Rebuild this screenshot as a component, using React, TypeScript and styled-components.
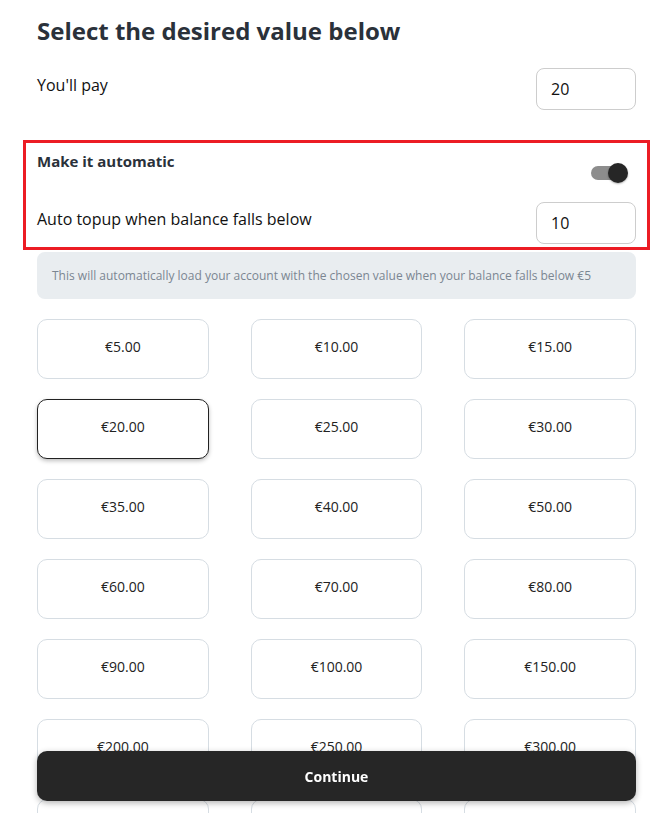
import { useState } from 'react'
import styled, { createGlobalStyle } from 'styled-components'

const GlobalStyle = createGlobalStyle`
  body {
    margin: 0;
    background: #fff;
    font-family: 'Open Sans', 'Noto Sans', sans-serif;
    color: #111;
  }
`

const Page = styled.div`
  padding: 15px 33px 90px 37px;
`

const Title = styled.h1`
  margin: 0 0 21px;
  font-size: 24px;
  line-height: 32px;
  font-weight: 700;
  color: #2a313a;
`

const Row = styled.div`
  display: flex;
  justify-content: space-between;
  align-items: flex-start;
`

const Label = styled.div`
  padding-top: 5px;
  font-size: 16px;
  line-height: 24px;
`

const AmountInput = styled.input`
  box-sizing: border-box;
  width: 100px;
  height: 42px;
  padding: 0 14px;
  border: 1px solid #cdcdcd;
  border-radius: 8px;
  font-family: inherit;
  font-size: 16px;
  color: #111;
  outline: none;
`

const AutoSection = styled.section`
  margin: 30px -14px 2px;
  padding: 7px 11px 3px;
  border: 3px solid #ec1c24;
  display: flex;
  flex-direction: column;
  gap: 19px;
`

const SubTitle = styled.div`
  font-size: 15px;
  line-height: 22px;
  font-weight: 700;
  color: #2a313a;
`

const SwitchBox = styled.button<{ $on: boolean }>`
  position: relative;
  width: 37px;
  height: 20px;
  margin: 13px 8px 0 0;
  padding: 0;
  border: none;
  background: none;
  cursor: pointer;
  &::before {
    content: '';
    position: absolute;
    left: 0;
    top: 3px;
    width: 34px;
    height: 14px;
    border-radius: 7px;
    background: ${(p) => (p.$on ? '#8d8d8d' : '#c9c9c9')};
  }
  &::after {
    content: '';
    position: absolute;
    top: 0;
    left: ${(p) => (p.$on ? '17px' : '0')};
    width: 20px;
    height: 20px;
    border-radius: 50%;
    background: #262626;
    box-shadow: 0 1px 2px rgba(0, 0, 0, 0.3);
  }
`

const Notice = styled.div`
  padding: 13px 15px;
  border-radius: 8px;
  background: #e9edf0;
  color: #7b8692;
  font-size: 12px;
  line-height: 21px;
`

const Grid = styled.div`
  margin-top: 20px;
  display: grid;
  grid-template-columns: repeat(3, 1fr);
  column-gap: 42px;
  row-gap: 20px;
`

const ValueCard = styled.button<{ $selected: boolean }>`
  height: 60px;
  padding: 0 0 6px;
  border: 1px solid ${(p) => (p.$selected ? '#222' : '#d6dde3')};
  border-radius: 10px;
  background: #fff;
  box-shadow: ${(p) => (p.$selected ? '0 2px 4px rgba(0,0,0,0.25)' : 'none')};
  font-family: inherit;
  font-size: 14px;
  color: #222;
  cursor: pointer;
`

const ContinueButton = styled.button`
  position: fixed;
  left: 37px;
  right: 33px;
  bottom: 12px;
  height: 50px;
  border: none;
  border-radius: 10px;
  background: #262626;
  box-shadow: 0 2px 6px rgba(0, 0, 0, 0.3);
  color: #fff;
  font-family: inherit;
  font-size: 14px;
  font-weight: 700;
  cursor: pointer;
`

const values = [5, 10, 15, 20, 25, 30, 35, 40, 50, 60, 70, 80, 90, 100, 150, 200, 250, 300, 400, 500, 1000]

export default function App() {
  const [amount, setAmount] = useState(20)
  const [auto, setAuto] = useState(true)
  const [threshold, setThreshold] = useState('10')

  return (
    <>
      <GlobalStyle />
      <Page>
        <Title>Select the desired value below</Title>
        <Row>
          <Label>You'll pay</Label>
          <AmountInput
            value={amount}
            onChange={(e) => setAmount(Number(e.target.value) || 0)}
          />
        </Row>
        <AutoSection>
          <Row>
            <SubTitle>Make it automatic</SubTitle>
            <SwitchBox $on={auto} onClick={() => setAuto(!auto)} aria-label="Toggle automatic topup" />
          </Row>
          <Row>
            <Label>Auto topup when balance falls below</Label>
            <AmountInput value={threshold} onChange={(e) => setThreshold(e.target.value)} />
          </Row>
        </AutoSection>
        <Notice>
          This will automatically load your account with the chosen value when your balance falls below €5
        </Notice>
        <Grid>
          {values.map((v) => (
            <ValueCard key={v} $selected={v === amount} onClick={() => setAmount(v)}>
              €{v.toFixed(2)}
            </ValueCard>
          ))}
        </Grid>
      </Page>
      <ContinueButton>Continue</ContinueButton>
    </>
  )
}
